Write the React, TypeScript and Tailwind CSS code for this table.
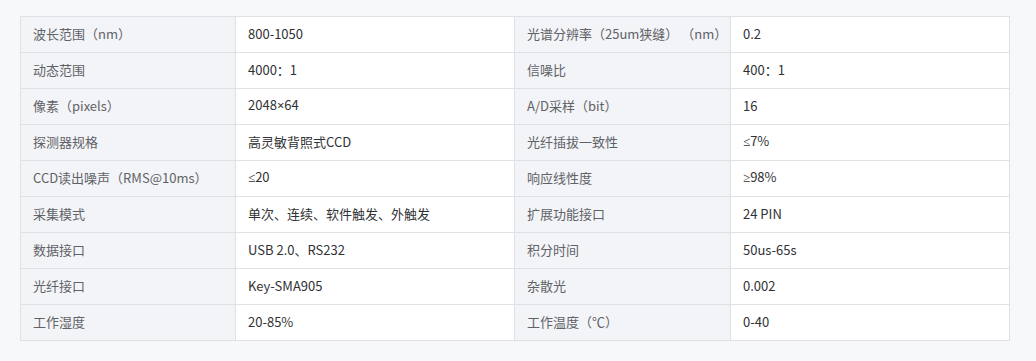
import type { ReactNode } from "react";

// narrow math symbols, the CJK font draws them full-width
const Sym = ({ c }: { c: string }) => <span className="font-['Noto_Sans']">{c}</span>;

const rows: [string, ReactNode, string, ReactNode][] = [
  ["波长范围（nm）", "800-1050", "光谱分辨率（25um狭缝） （nm）", "0.2"],
  ["动态范围", "4000：1", "信噪比", "400：1"],
  ["像素（pixels）", <>2048<Sym c="×" />64</>, "A/D采样（bit）", "16"],
  ["探测器规格", "高灵敏背照式CCD", "光纤插拔一致性", <><Sym c="≤" />7%</>],
  ["CCD读出噪声（RMS@10ms）", <><Sym c="≤" />20</>, "响应线性度", <><Sym c="≥" />98%</>],
  ["采集模式", "单次、连续、软件触发、外触发", "扩展功能接口", "24 PIN"],
  ["数据接口", "USB 2.0、RS232", "积分时间", "50us-65s"],
  ["光纤接口", "Key-SMA905", "杂散光", "0.002"],
  ["工作湿度", "20-85%", "工作温度（℃）", "0-40"],
];

const label = "border border-[#dfe1e6] bg-[#f3f4f8] px-[12px] pb-[2px] whitespace-nowrap text-[#606266]";
const value = "border border-[#dfe1e6] bg-white px-[12px] pb-[2px] whitespace-nowrap text-[#303133]";

export default function App() {
  return (
    <main
      className="min-h-[361px] bg-[#f7f8fa] pl-[20px] pt-[16px]"
      style={{ fontFamily: '"Noto Sans CJK SC", "Noto Sans", sans-serif' }}
    >
      <table className="w-[990px] table-fixed border-collapse border border-[#dfe1e6] text-[13px]">
        <colgroup>
          <col className="w-[215px]" />
          <col className="w-[279px]" />
          <col className="w-[216px]" />
          <col />
        </colgroup>
        <tbody>
          {rows.map((r) => (
            <tr key={r[0]} className="h-[36px]">
              <td className={label}>{r[0]}</td>
              <td className={value}>{r[1]}</td>
              <td className={label}>{r[2]}</td>
              <td className={value}>{r[3]}</td>
            </tr>
          ))}
        </tbody>
      </table>
    </main>
  );
}
